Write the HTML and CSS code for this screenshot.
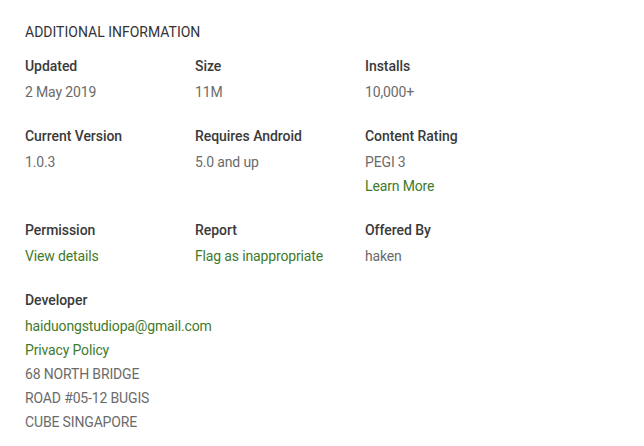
FILE: index.html
```html
<!DOCTYPE html>
<html>
<head>
<meta charset="utf-8">
<link rel="stylesheet" href="styles.css">
</head>
<body>
<section class="info">
  <h2 class="title">Additional Information</h2>
  <div class="grid">
    <div class="item">
      <div class="label">Updated</div>
      <div class="value">2 May 2019</div>
    </div>
    <div class="item">
      <div class="label">Size</div>
      <div class="value">11M</div>
    </div>
    <div class="item">
      <div class="label">Installs</div>
      <div class="value">10,000+</div>
    </div>
    <div class="item">
      <div class="label">Current Version</div>
      <div class="value">1.0.3</div>
    </div>
    <div class="item">
      <div class="label">Requires Android</div>
      <div class="value">5.0 and up</div>
    </div>
    <div class="item">
      <div class="label">Content Rating</div>
      <div class="value">PEGI 3</div>
      <div class="value"><a class="link" href="#">Learn More</a></div>
    </div>
    <div class="item">
      <div class="label">Permission</div>
      <div class="value"><a class="link" href="#">View details</a></div>
    </div>
    <div class="item">
      <div class="label">Report</div>
      <div class="value"><a class="link" href="#">Flag as inappropriate</a></div>
    </div>
    <div class="item">
      <div class="label">Offered By</div>
      <div class="value">haken</div>
    </div>
    <div class="item">
      <div class="label">Developer</div>
      <div class="value"><a class="link" href="#">haiduongstudiopa@gmail.com</a></div>
      <div class="value"><a class="link" href="#">Privacy Policy</a></div>
      <div class="value">68 NORTH BRIDGE</div>
      <div class="value">ROAD #05-12 BUGIS</div>
      <div class="value">CUBE SINGAPORE</div>
    </div>
  </div>
</section>
</body>
</html>
```
FILE: styles.css
```css
html, body {
  margin: 0;
  padding: 0;
  background: #fff;
}
body {
  font-family: Roboto, "Noto Sans", Arial, sans-serif;
  font-size: 14px;
  color: #333;
}
.info {
  padding: 20px 0 0 25px;
}
.title {
  margin: 0 0 10px 0;
  font-size: 14px;
  font-weight: 400;
  line-height: 24px;
  text-transform: uppercase;
  color: #333;
}
.grid {
  display: grid;
  grid-template-columns: 170px 170px 170px;
  align-items: start;
}
.item {
  margin-bottom: 20px;
}
.label {
  font-weight: 500;
  line-height: 24px;
  margin-bottom: 2px;
  color: #3a3a3a;
  letter-spacing: -0.05px;
}
.value {
  line-height: 24px;
  color: #6b6b6b;
  letter-spacing: -0.15px;
}
.link {
  color: #3f7a2b;
  text-decoration: none;
}
```
